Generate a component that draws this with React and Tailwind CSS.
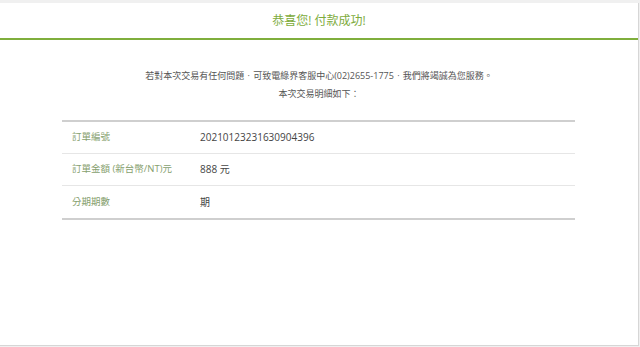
export default function App() {
  const font = { fontFamily: '"Open Sans", "Noto Sans CJK TC", sans-serif' };
  const rows = [
    ["訂單編號", "20210123231630904396"],
    ["訂單金額 (新台幣/NT)元", "888 元"],
    ["分期期數", "期"],
  ];
  const Dot = () => <span className="inline-block w-[1em] text-center">·</span>;
  return (
    <div lang="zh-Hant-TW" className="w-[640px] h-[347px] bg-[#f0f0f0] pt-[3px] overflow-hidden" style={font}>
      <div className="w-[639px] h-[343px] bg-white border-r border-b border-[#d6d6d6] flex flex-col">
        <div className="h-[35px] flex items-center justify-center text-[12px] text-[#7dab3b]">
          恭喜您! 付款成功!
        </div>
        <div className="h-[2px] bg-[#7fae3c]" />
        <div className="flex flex-col items-center pt-[27px] text-[9px] text-[#555] leading-[18px]">
          <p>
            若對本次交易有任何問題<Dot />可致電綠界客服中心(02)2655-1775<Dot />我們將竭誠為您服務。
          </p>
          <p>本次交易明細如下：</p>
        </div>
        <div className="mx-[62px] mt-[17px] w-[513px] border-t-2 border-b-2 border-[#cfcfcf]">
          {rows.map(([k, v], i) => (
            <div
              key={k}
              className={`flex items-center h-[32px] ${i < rows.length - 1 ? "border-b border-[#e6e6e6]" : ""}`}
            >
              <div className="w-[138px] pl-[10px] text-[9.5px] text-[#86a06e]">{k}</div>
              <div className="text-[10px] text-[#444]">{v}</div>
            </div>
          ))}
        </div>
      </div>
    </div>
  );
}
